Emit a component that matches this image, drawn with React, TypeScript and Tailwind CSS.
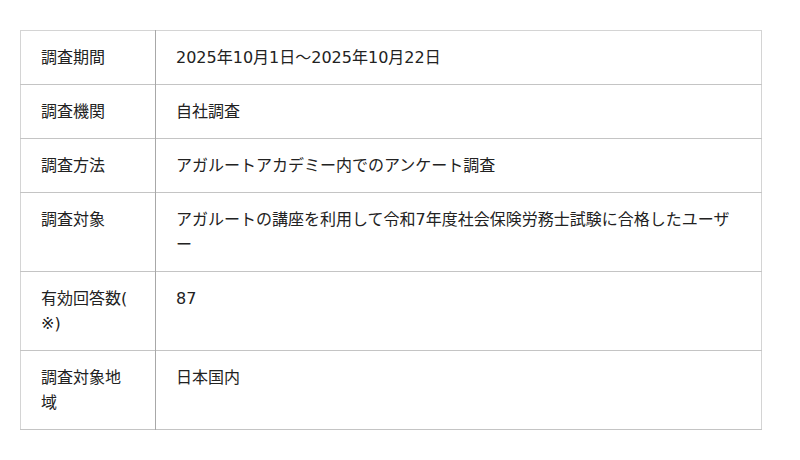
const rows: [string, string][] = [
  ["調査期間", "2025年10月1日〜2025年10月22日"],
  ["調査機関", "自社調査"],
  ["調査方法", "アガルートアカデミー内でのアンケート調査"],
  [
    "調査対象",
    "アガルートの講座を利用して令和7年度社会保険労務士試験に合格したユーザー",
  ],
  ["有効回答数(※)", "87"],
  ["調査対象地域", "日本国内"],
];

export default function App() {
  return (
    <div
      className="h-[460px] w-[800px] bg-white pl-[20px] pt-[30px] text-[16px] leading-[25px] text-[#222]"
      style={{ fontFamily: '"DejaVu Sans", "Noto Sans CJK JP", sans-serif' }}
    >
      <table className="w-[742px] table-fixed border-collapse border border-[#d4d4d4]">
        <colgroup>
          <col className="w-[135px]" />
          <col />
        </colgroup>
        <tbody>
          {rows.map(([label, value]) => (
            <tr key={label} className="border-b border-[#c4c4c4] align-top">
              <td className="border-r border-[#a8a8a8] px-[20px] py-[14px] [line-break:anywhere]">
                {label}
              </td>
              <td className="px-[20px] py-[14px] [line-break:anywhere]">{value}</td>
            </tr>
          ))}
        </tbody>
      </table>
    </div>
  );
}
